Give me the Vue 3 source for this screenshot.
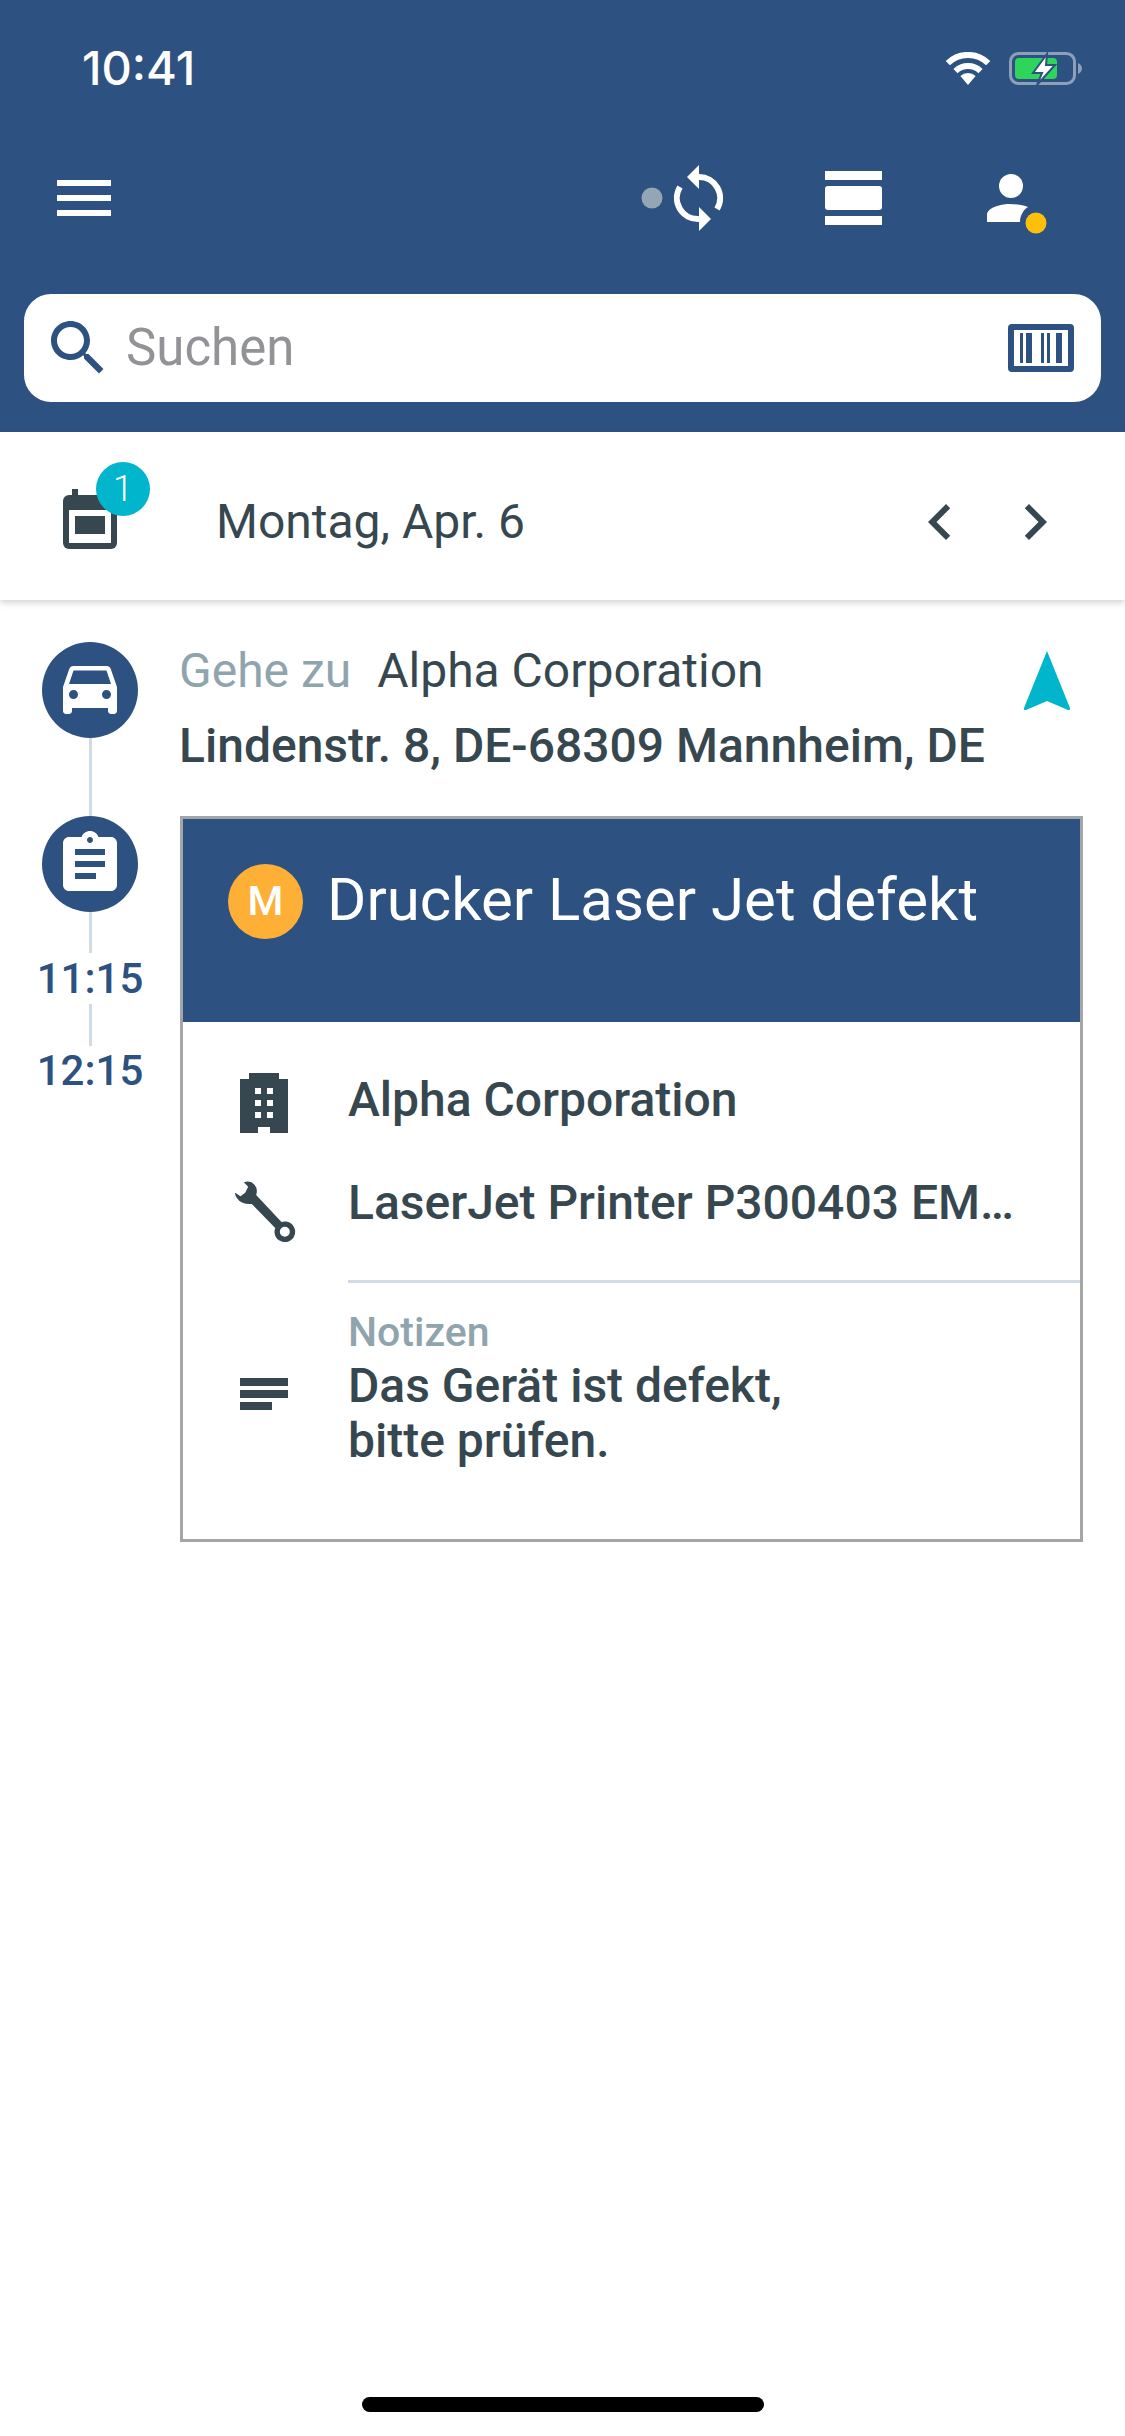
<template>
  <div class="screen">
    <header class="top">
      <div class="status">
        <span class="clock">10:41</span>
        <svg class="status-icons" width="136" height="33" viewBox="946 52 136 33">
          <path d="M947.8 63.1A29 29 0 0 1 988.2 63.1" fill="none" stroke="#fff" stroke-width="6" />
          <path d="M955.5 71.1A18 18 0 0 1 980.5 71.1" fill="none" stroke="#fff" stroke-width="6" />
          <path d="M968 85L960.4 76.1A11 11 0 0 1 975.6 76.1Z" fill="#fff" />
          <rect x="1010.5" y="53.5" width="64" height="30" rx="8" fill="none" stroke="#8d9fb9" stroke-width="3" />
          <path d="M1078 63C1080.5 64 1082 66 1082 68.500C1082 71 1080.500 73 1078 74Z" fill="#8d9fb9" />
          <rect x="1015" y="58" width="42" height="21" rx="4" fill="#2dd55b" />
          <path d="M1047 54L1033 73H1042L1037 85L1055 65H1046Z" fill="#fff" stroke="#2d5180" stroke-width="2" />
        </svg>
      </div>
      <div class="toolbar">
        <svg width="54" height="36" viewBox="0 0 54 36">
          <rect width="54" height="6" fill="#fff" />
          <rect y="15" width="54" height="6" fill="#fff" />
          <rect y="30" width="54" height="6" fill="#fff" />
        </svg>
        <svg class="sync" width="84" height="72" viewBox="640 162 84 72">
          <circle cx="652" cy="198" r="10.500" fill="#94a6b3" />
          <path d="M699 177A21 21 0 0 1 717 209" fill="none" stroke="#fff" stroke-width="6" />
          <path d="M699 219A21 21 0 0 1 680 187" fill="none" stroke="#fff" stroke-width="6" />
          <path d="M699 165V189L687 177Z" fill="#fff" />
          <path d="M699 207V231L711 219Z" fill="#fff" />
        </svg>
        <svg class="layers" width="57" height="54" viewBox="0 0 57 54">
          <rect width="57" height="9" fill="#fff" />
          <rect y="15" width="57" height="24" rx="3" fill="#fff" />
          <rect y="45" width="57" height="9" fill="#fff" />
        </svg>
        <svg class="person" width="60" height="72" viewBox="987 162 60 72">
          <circle cx="1011" cy="186" r="12" fill="#fff" />
          <path d="M987 222V215C987 208 1000 204 1009 204C1016 204 1023 205 1028 207C1023 210 1020 216 1020 222Z" fill="#fff" />
          <circle cx="1036" cy="223" r="10.500" fill="#fcc00a" />
        </svg>
      </div>
      <div class="search">
        <svg class="search-icon" width="72" height="72" viewBox="0 0 24 24">
          <path d="M15.500 14h-.79l-.28-.27C15.410 12.590 16 11.110 16 9.500 16 5.910 13.090 3 9.500 3S3 5.910 3 9.500 5.910 16 9.500 16c1.610 0 3.090-.59 4.230-1.570l.27.28v.79l5 4.990L20.490 19l-4.990-5zm-6 0C7.010 14 5 11.990 5 9.500S7.010 5 9.500 5 14 7.010 14 9.500 11.990 14 9.500 14z" fill="#2d5180" />
        </svg>
        <span class="placeholder">Suchen</span>
        <svg class="barcode" width="66" height="48" viewBox="0 0 66 48">
          <rect width="66" height="48" rx="4" fill="#2d5180" />
          <rect x="6" y="6" width="54" height="36" fill="#fff" />
          <rect x="12" y="9" width="3" height="30" fill="#2d5180" />
          <rect x="18" y="9" width="6" height="30" fill="#2d5180" />
          <rect x="33" y="9" width="3" height="30" fill="#2d5180" />
          <rect x="39" y="9" width="3" height="30" fill="#2d5180" />
          <rect x="48" y="9" width="6" height="30" fill="#2d5180" />
        </svg>
      </div>
    </header>

    <section class="datebar">
      <div class="calendar">
        <svg width="54" height="60" viewBox="0 0 54 60">
          <rect x="9" width="6" height="8" fill="#37474f" />
          <rect y="6" width="54" height="54" rx="6" fill="#37474f" />
          <rect x="6" y="21" width="42" height="33" fill="#fff" />
          <rect x="12" y="27" width="30" height="18" fill="#37474f" />
        </svg>
        <span class="badge">1</span>
      </div>
      <span class="date">Montag, Apr. 6</span>
      <svg class="chev-left" width="72" height="72" viewBox="0 0 24 24">
        <path d="M15.410 7.410L14 6l-6 6 6 6 1.410-1.410L10.830 12z" fill="#37474f" />
      </svg>
      <svg class="chev-right" width="72" height="72" viewBox="0 0 24 24">
        <path d="M10 6L8.590 7.410 13.170 12l-4.580 4.590L10 18l6-6z" fill="#37474f" />
      </svg>
    </section>

    <main class="agenda">
      <aside class="timeline">
        <div class="node">
          <svg width="72" height="72" viewBox="0 1 24 24">
            <path d="M18.920 6.010C18.720 5.420 18.160 5 17.500 5h-11c-.66 0-1.210.42-1.420 1.010L3 12v8c0 .55.45 1 1 1h1c.55 0 1-.45 1-1v-1h12v1c0 .55.45 1 1 1h1c.55 0 1-.45 1-1v-8l-2.080-5.990zM6.500 16c-.83 0-1.500-.67-1.500-1.500S5.670 13 6.500 13s1.500.67 1.500 1.500S7.330 16 6.500 16zm11 0c-.83 0-1.500-.67-1.500-1.500s.67-1.500 1.500-1.500 1.500.67 1.500 1.500-.67 1.500-1.500 1.500zM5 11l1.500-4.500h11L19 11H5z" fill="#fff" />
          </svg>
        </div>
        <div class="line line-a"></div>
        <div class="node">
          <svg width="72" height="72" viewBox="0 0 24 24">
            <path d="M19 3h-4.180C14.400 1.840 13.300 1 12 1c-1.300 0-2.400.84-2.820 2H5c-1.100 0-2 .9-2 2v14c0 1.100.9 2 2 2h14c1.100 0 2-.9 2-2V5c0-1.100-.9-2-2-2zm-7 0c.55 0 1 .45 1 1s-.45 1-1 1-1-.45-1-1 .45-1 1-1zm2 14H7v-2h7v2zm3-4H7v-2h10v2zm0-4H7V7h10v2z" fill="#fff" />
          </svg>
        </div>
        <div class="line line-b"></div>
        <span class="time time-first">11:15</span>
        <div class="line line-c"></div>
        <span class="time">12:15</span>
      </aside>

      <div class="content">
        <div class="destination">
          <div class="dest-text">
            <div class="dest-line"><span class="muted">Gehe zu</span><span class="company">Alpha Corporation</span></div>
            <div class="address">Lindenstr. 8, DE-68309 Mannheim, DE</div>
          </div>
          <svg class="nav-arrow" width="46" height="59" viewBox="1024 651 46 59">
            <path d="M1047 651L1070 708Q1070.500 710.500 1068 710L1047 701L1026 710Q1023.500 710.500 1024 708Z" fill="#00b5cc" />
          </svg>
        </div>

        <article class="card">
          <div class="card-head">
            <span class="prio">M</span>
            <h1 class="title">Drucker Laser Jet defekt</h1>
          </div>
          <div class="card-body">
            <div class="row">
              <div class="row-icon">
                <svg width="48" height="60" viewBox="0 0 48 60">
                  <path d="M9 0H39V6H48V60H30V54H18V60H0V6H9Z" fill="#37474f" />
                  <g fill="#fff">
                    <rect x="15" y="15" width="6" height="6" /><rect x="27" y="15" width="6" height="6" />
                    <rect x="15" y="27" width="6" height="6" /><rect x="27" y="27" width="6" height="6" />
                    <rect x="15" y="39" width="6" height="6" /><rect x="27" y="39" width="6" height="6" />
                  </g>
                </svg>
              </div>
              <span class="strong row-text-a">Alpha Corporation</span>
            </div>
            <div class="row row-second">
              <div class="row-icon">
                <svg width="67" height="65" viewBox="30 355 200 195">
                  <path fill-rule="evenodd" d="M68 365Q88 358 100 372Q111 385 105 403L181 484A31 31 0 1 1 162.200 501.800L92 430Q60 432 47 412Q40 402 42 396L58 407L72 396L81 378ZM191 498A15 15 0 1 0 191 528A15 15 0 1 0 191 498Z" fill="#37474f" />
                </svg>
              </div>
              <span class="strong row-text-b">LaserJet Printer P300403 EM…</span>
            </div>
            <div class="divider"></div>
            <div class="row row-notes">
              <div class="row-icon notes-icon">
                <svg width="48" height="32" viewBox="0 0 48 32">
                  <rect width="48" height="8" fill="#37474f" />
                  <rect y="12" width="48" height="8" fill="#37474f" />
                  <rect y="24" width="32" height="8" fill="#37474f" />
                </svg>
              </div>
              <div>
                <div class="notes-label">Notizen</div>
                <div class="strong notes-text">Das Gerät ist defekt,<br />bitte prüfen.</div>
              </div>
            </div>
          </div>
        </article>
      </div>
    </main>

    <div class="home"></div>
  </div>
</template>

<script setup>
</script>

<style>
html, body { margin: 0; background: #fff; }
</style>

<style scoped>
.screen {
  width: 1125px;
  height: 2436px;
  display: flex;
  flex-direction: column;
  overflow: hidden;
  background: #fff;
  font-family: Roboto, "Liberation Sans", sans-serif;
  color: #37474f;
}
.top {
  height: 432px;
  box-sizing: border-box;
  background: #2d5180;
  flex: none;
}
.status {
  height: 132px;
  display: flex;
  align-items: flex-start;
  justify-content: space-between;
  padding: 0 43px 0 82px;
}
.clock {
  margin-top: 42px;
  font-family: Inter, sans-serif;
  font-weight: 500;
  font-size: 47px;
  line-height: 52px;
  color: #fff;
}
.status-icons { margin-top: 52px; }
.toolbar {
  height: 132px;
  display: flex;
  align-items: center;
  padding: 0 78px 0 57px;
}
.sync { margin-left: 529px; }
.layers { margin-left: 101px; }
.person { margin-left: 105px; }
.search {
  height: 108px;
  margin: 30px 24px 0;
  background: #fff;
  border-radius: 27px;
  display: flex;
  align-items: center;
  padding-left: 18px;
  padding-right: 27px;
}
.placeholder {
  margin-left: 12px;
  font-size: 51px;
  color: #929396;
  line-height: 56px;
}
.barcode { margin-left: auto; }
.datebar {
  height: 168px;
  flex: none;
  display: flex;
  align-items: flex-start;
  padding-left: 63px;
  box-shadow: 0 3px 6px rgba(60, 70, 80, 0.22);
  position: relative;
}
.calendar {
  position: relative;
  width: 54px;
  height: 60px;
  margin-top: 57px;
}
.calendar svg { display: block; }
.badge {
  position: absolute;
  left: 33px;
  top: -27px;
  width: 54px;
  height: 54px;
  border-radius: 50%;
  background: #00b5cc;
  color: #fff;
  font-size: 36px;
  font-weight: 300;
  line-height: 54px;
  text-align: center;
}
.date {
  margin: 60px 0 0 99px;
  font-size: 48px;
  line-height: 60px;
}
.chev-left { margin: 54px 0 0 auto; }
.chev-right { margin: 54px 54px 0 23px; }
.agenda {
  display: flex;
  align-items: flex-start;
}
.timeline {
  width: 180px;
  flex: none;
  padding-top: 42px;
  display: flex;
  flex-direction: column;
  align-items: center;
}
.node {
  width: 96px;
  height: 96px;
  border-radius: 50%;
  background: #2d5180;
  display: flex;
  align-items: center;
  justify-content: center;
}
.line { width: 3px; background: #d0dbe5; }
.line-a { height: 78px; }
.line-b { height: 41px; }
.line-c { height: 42px; }
.time {
  font-size: 42px;
  font-weight: 500;
  line-height: 50px;
  color: #2d5180;
}
.time-first { margin-top: 1px; }
.content {
  width: 903px;
  padding-top: 33px;
}
.destination { display: flex; align-items: flex-start; }
.dest-text { flex: 1; margin-left: -1px; }
.dest-line { font-size: 48px; line-height: 75px; }
.muted { color: #90a4ae; }
.company { margin-left: 26px; }
.address { font-size: 48px; line-height: 75px; font-weight: 500; }
.nav-arrow { margin: 18px 13px 0 0; }
.card {
  margin-top: 33px;
  height: 726px;
  box-sizing: border-box;
  border: 3px solid #a3a6a8;
}
.card-head {
  height: 203px;
  box-sizing: border-box;
  background: #2d5180;
  padding: 45px 0 0 45px;
  display: flex;
  align-items: flex-start;
}
.prio {
  width: 75px;
  height: 75px;
  border-radius: 50%;
  background: #fdb035;
  color: #fff;
  font-size: 41px;
  font-weight: 500;
  line-height: 75px;
  text-align: center;
  flex: none;
}
.title {
  margin: 0 0 0 24px;
  font-size: 60px;
  font-weight: 400;
  line-height: 72px;
  color: #fff;
}
.card-body { padding-top: 45px; }
.row { display: flex; align-items: flex-start; }
.row-second { margin-top: 36px; }
.row-icon {
  width: 72px;
  height: 72px;
  margin: 0 48px 0 45px;
  flex: none;
  display: flex;
  align-items: center;
  justify-content: center;
}
.strong { font-size: 48px; font-weight: 500; }
.row-text-a { line-height: 65px; }
.row-text-b { line-height: 56px; white-space: nowrap; }
.divider {
  height: 3px;
  margin: 33px 0 0 165px;
  background: #d0dbe5;
}
.row-notes { margin-top: 25px; }
.notes-icon { margin-top: 58px; height: 56px; }
.notes-label {
  font-size: 41px;
  font-weight: 500;
  line-height: 48px;
  color: #90a4ae;
}
.notes-text { margin-top: 2px; line-height: 55px; }
.home {
  width: 402px;
  height: 15px;
  margin: auto 0 24px 362px;
  background: #000;
  border-radius: 8px;
  flex: none;
}
</style>
